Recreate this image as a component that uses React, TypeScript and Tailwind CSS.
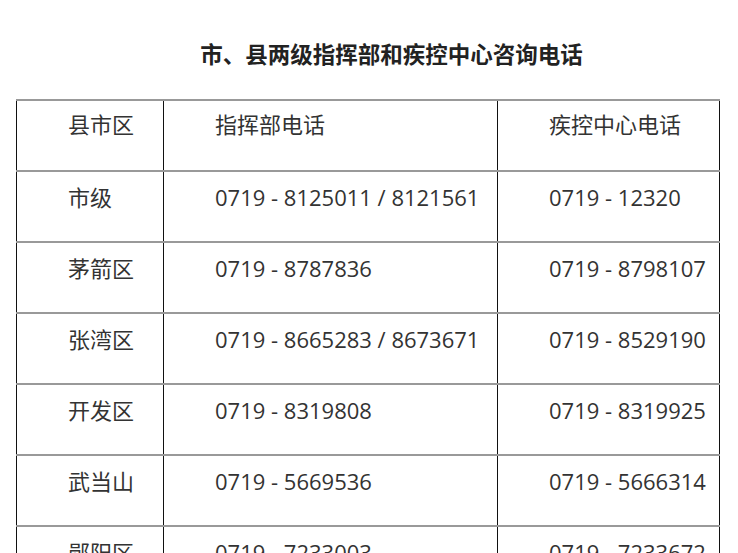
import React from "react";

const rows = [
  { area: "市级", hq: "0719 - 8125011 / 8121561", cdc: "0719 - 12320" },
  { area: "茅箭区", hq: "0719 - 8787836", cdc: "0719 - 8798107" },
  { area: "张湾区", hq: "0719 - 8665283 / 8673671", cdc: "0719 - 8529190" },
  { area: "开发区", hq: "0719 - 8319808", cdc: "0719 - 8319925" },
  { area: "武当山", hq: "0719 - 5669536", cdc: "0719 - 5666314" },
  { area: "郧阳区", hq: "0719 - 7233003", cdc: "0719 - 7233672" },
];

const font = { fontFamily: '"Open Sans", "Noto Sans CJK SC", sans-serif' };

function Row({ a, b, c, header }: { a: string; b: string; c: string; header?: boolean }) {
  const pad = header ? "pt-[7px]" : "pt-[9px]";
  return (
    <div className="flex h-[71px] border-t-2 border-[#999999]">
      <div className={`w-[147px] border-l border-[#111111] pl-[51px] ${pad}`}>{a}</div>
      <div className={`w-[334px] border-l border-[#111111] pl-[51px] ${pad}`}>{b}</div>
      <div className={`w-[223px] border-l border-r border-[#111111] pl-[51px] ${pad}`}>{c}</div>
    </div>
  );
}

export default function App() {
  return (
    <div className="h-[553px] overflow-hidden bg-white text-[#333333]" style={font}>
      <h1 className="pt-[38px] text-center text-[22.5px] font-bold leading-[33px] indent-[2em] text-[#222222]">
        市、县两级指挥部和疾控中心咨询电话
      </h1>
      <div className="ml-[16px] mt-[28px] w-[704px] text-[22px] leading-[33px]">
        <Row a="县市区" b="指挥部电话" c="疾控中心电话" header />
        {rows.map((r) => (
          <Row key={r.area} a={r.area} b={r.hq} c={r.cdc} />
        ))}
      </div>
    </div>
  );
}
